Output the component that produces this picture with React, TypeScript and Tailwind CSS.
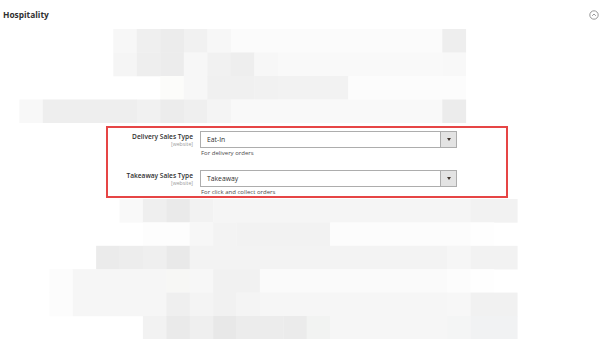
import React from 'react';

type Span = [number, number, string];

// pixelated (redacted) rows above and below the highlighted fields
const topRows: Span[][] = [
  [[4, 1, '#f7f7f7'], [5, 1, '#efefef'], [6, 1, '#ececec'], [7, 1, '#f1f1f1'], [8, 1, '#f7f7f7'], [9, 9, '#fbfbfb'], [18, 1, '#eeeeee']],
  [[4, 1, '#f5f5f5'], [5, 1, '#eeeeee'], [6, 1, '#ececec'], [7, 1, '#f7f7f7'], [8, 1, '#f1f1f1'], [9, 1, '#eeeeee'], [10, 1, '#f7f7f7'], [11, 7, '#f9f9f9'], [18, 1, '#f8f8f8']],
  [[6, 1, '#fcfcfa'], [7, 1, '#f7f7f7'], [8, 2, '#f0f0f0'], [10, 1, '#f1f1f1'], [11, 3, '#f2f2f2'], [14, 5, '#fcfcfc']],
  [[0, 1, '#f8f8f8'], [1, 4, '#eeeeee'], [5, 1, '#f1f1f1'], [6, 1, '#ececec'], [7, 1, '#efefef'], [8, 1, '#f4f4f4'], [9, 9, '#f9f9f9'], [18, 1, '#ececec']],
];

const bottomRows: Span[][] = [
  [[3, 1, '#f9f9f9'], [4, 1, '#efefef'], [5, 1, '#eaeaea'], [6, 1, '#f2f2f2'], [7, 11, '#f5f5f5'], [18, 2, '#f2f2f2']],
  [[4, 2, '#fdfdfd'], [6, 1, '#f7f7f7'], [7, 1, '#f3f3f3'], [8, 4, '#f2f2f2'], [12, 6, '#fcfcfc'], [18, 1, '#fefefe']],
  [[2, 1, '#ebebeb'], [3, 1, '#ededed'], [4, 1, '#efefef'], [5, 1, '#e9e9e9'], [6, 11, '#f3f3f3'], [17, 1, '#f6f6f6'], [18, 2, '#f2f2f2']],
  [[0, 1, '#fcfcfc'], [1, 4, '#f6f6f6'], [5, 1, '#f7f7f5'], [6, 1, '#f7f7f7'], [7, 2, '#f1f1f1'], [9, 8, '#fafafa'], [17, 1, '#fcfcfc'], [18, 1, '#fefefe']],
  [[0, 1, '#fcfcfc'], [1, 4, '#f6f6f6'], [5, 1, '#efefef'], [6, 1, '#f4f4f4'], [7, 1, '#f1f1f1'], [8, 1, '#f4f4f4'], [9, 8, '#f6f6f6'], [17, 1, '#f7f7f7'], [18, 2, '#f1f1f1']],
  [[4, 1, '#f2f2f2'], [5, 1, '#eaeaea'], [6, 1, '#efefef'], [7, 1, '#e8e8e8'], [8, 2, '#ececec'], [10, 1, '#ebebeb'], [11, 1, '#f2f3f2'], [12, 5, '#f6f6f6'], [17, 1, '#f4f5f5'], [18, 2, '#f1f2f3']],
];

const Mosaic = ({ rows, x0, cell, className }: { rows: Span[][]; x0: number; cell: number; className: string }) => (
  <svg className={className} viewBox={`0 0 600 ${rows.length * cell}`} width={600} height={rows.length * cell}>
    {rows.map((row, r) =>
      row.map(([k, n, c]) => (
        <rect key={`${r}-${k}`} x={x0 + k * cell} y={r * cell} width={n * cell + 0.3} height={cell + 0.3} fill={c} />
      ))
    )}
  </svg>
);

const Field = ({ label, value, note, className }: { label: string; value: string; note: string; className?: string }) => (
  <div className={`grid grid-cols-[85px_257px] gap-x-[7px] ${className ?? ''}`}>
    <div className="flex flex-col items-end pt-[2px]">
      <span className="text-[6.6px] leading-[8px] font-semibold text-[#303030] whitespace-nowrap">{label}</span>
      <span className="text-[5.2px] leading-[6px] text-[#9a9a9a]">[website]</span>
    </div>
    <div>
      <div className="flex h-[17px] border border-[#adadad] bg-white">
        <span className="flex-1 pl-[6px] text-[6.8px] leading-[15px] text-[#303030]">{value}</span>
        <div className="w-[16px] bg-[#e3e3e3] border-l border-[#adadad] flex items-center justify-center">
          <div className="w-0 h-0 border-l-[2px] border-r-[2px] border-t-[3px] border-l-transparent border-r-transparent border-t-[#41362f]" />
        </div>
      </div>
      <div className="mt-[1px] text-[6px] leading-[8px] text-[#4a4a4a] pl-[1px]">{note}</div>
    </div>
  </div>
);

export default function App() {
  return (
    <div className="w-[600px] h-[355px] bg-white overflow-hidden font-['Open_Sans',sans-serif]">
      <div className="h-[29px] flex items-center justify-between pl-[3px] pr-[1px] pt-[1px]">
        <span className="text-[8.4px] font-bold text-[#303030]">Hospitality</span>
        <svg width="10" height="10" viewBox="0 0 10 10">
          <circle cx="5" cy="5" r="4.2" fill="none" stroke="#8d8d8d" strokeWidth="0.9" />
          <path d="M3.2 5.8 L5 4 L6.8 5.8" fill="none" stroke="#8d8d8d" strokeWidth="0.9" />
        </svg>
      </div>

      <Mosaic rows={topRows} x0={19.3} cell={23.5} className="block" />

      <div className="mt-[3px] ml-[106px] w-[402px] h-[71.5px] border-2 border-[#e64545] pt-[3px]">
        <Field label="Delivery Sales Type" value="Eat-In" note="For delivery orders" />
        <Field label="Takeaway Sales Type" value="Takeaway" note="For click and collect orders" className="mt-[13px]" />
      </div>

      <Mosaic rows={bottomRows} x0={49.3} cell={23.4} className="block mt-[1px]" />
    </div>
  );
}
